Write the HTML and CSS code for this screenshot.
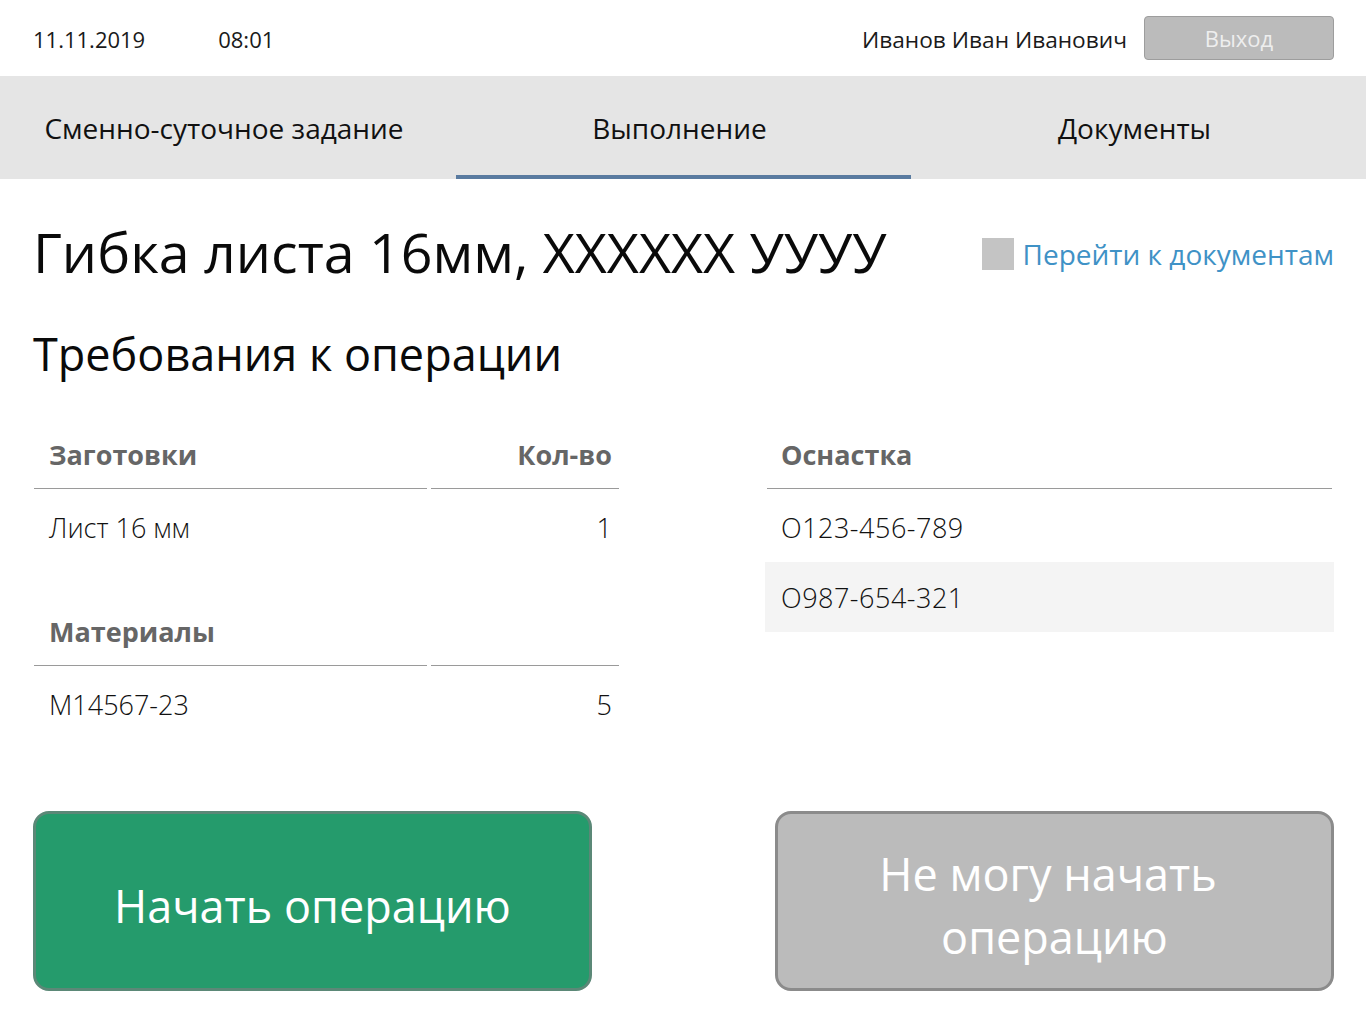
FILE: index.html
```html
<!DOCTYPE html>
<html lang="ru">
<head>
<meta charset="utf-8">
<title>Выполнение</title>
<link rel="stylesheet" href="styles.css">
</head>
<body>
<header class="topbar">
  <span class="date">11.11.2019</span>
  <span class="time">08:01</span>
  <span class="spacer"></span>
  <span class="user">Иванов Иван Иванович</span>
  <button class="exit-btn">Выход</button>
</header>
<nav class="tabs">
  <div class="tab">Сменно-суточное задание</div>
  <div class="tab tab-active">Выполнение</div>
  <div class="tab">Документы</div>
</nav>
<main class="content">
  <div class="title-row">
    <h1 class="title">Гибка листа 16мм, XXXXXX УУУУ</h1>
    <a class="doc-link"><span class="doc-icon"></span>Перейти к документам</a>
  </div>
  <h2 class="subtitle">Требования к операции</h2>
  <div class="req-grid">
    <div class="left-col">
      <section class="tbl">
        <div class="tbl-head">
          <div class="cell name-cell">Заготовки</div>
          <div class="cell qty-cell">Кол-во</div>
        </div>
        <div class="tbl-body">
          <div class="tbl-row">
            <div class="cell name-cell">Лист 16 мм</div>
            <div class="cell qty-cell">1</div>
          </div>
        </div>
      </section>
      <section class="tbl">
        <div class="tbl-head">
          <div class="cell name-cell">Материалы</div>
          <div class="cell qty-cell"></div>
        </div>
        <div class="tbl-body">
          <div class="tbl-row">
            <div class="cell name-cell">M14567-23</div>
            <div class="cell qty-cell">5</div>
          </div>
        </div>
      </section>
    </div>
    <div class="right-col">
      <section class="tbl tbl-single">
        <div class="tbl-head">
          <div class="cell full-cell">Оснастка</div>
        </div>
        <div class="tbl-body">
          <div class="tbl-row">
            <div class="cell full-cell">O123-456-789</div>
          </div>
          <div class="tbl-row row-alt">
            <div class="cell full-cell">O987-654-321</div>
          </div>
        </div>
      </section>
    </div>
  </div>
  <div class="actions">
    <button class="big-btn btn-start">Начать операцию</button>
    <button class="big-btn btn-cant"><span class="line1">Не могу начать</span><br>операцию</button>
  </div>
</main>
</body>
</html>
```
FILE: styles.css
```css
* { box-sizing: border-box; }
html, body { margin: 0; padding: 0; background: #fff; }
body {
  font-family: "Open Sans", "Noto Sans", sans-serif;
  color: #111;
  width: 1366px;
}
button { font-family: inherit; cursor: pointer; }

.topbar {
  height: 76px;
  display: flex;
  align-items: center;
  padding: 0 32px 0 33px;
  font-size: 22px;
  color: #1a1a1a;
}
.date, .time, .user { padding-top: 2px; }
.time { margin-left: 73px; }
.spacer { flex: 1; }
.user { margin-right: 17px; font-size: 22.7px; }
.exit-btn {
  width: 190px;
  height: 44px;
  background: #bbbbbb;
  border: 1px solid #9d9d9d;
  border-radius: 4px;
  color: #eeeeee;
  font-size: 22px;
  padding: 0;
}

.tabs {
  height: 103px;
  background: #e5e5e5;
  display: grid;
  grid-template-columns: 456px 455px 455px;
}
.tab {
  display: flex;
  align-items: center;
  justify-content: center;
  font-size: 28px;
  color: #111;
  border-bottom: 4px solid transparent;
  padding-top: 4px;
  padding-right: 8px;
}
.tab-active { border-bottom-color: #5a7ba0; }

.content {
  padding: 32px 32px 0 33px;
}
.title-row {
  display: flex;
  align-items: center;
  justify-content: space-between;
  height: 80px;
}
.title {
  margin: 0;
  font-size: 55.5px;
  font-weight: 400;
  line-height: 80px;
  color: #0a0a0a;
  padding-top: 2px;
}
.doc-link {
  display: flex;
  align-items: center;
  font-size: 28px;
  color: #3f92c6;
  margin-top: 6px;
}
.doc-icon {
  width: 32px;
  height: 32px;
  background: #c4c4c4;
  margin-right: 9px;
}
.subtitle {
  margin: 0;
  margin-top: 33px;
  font-size: 45px;
  font-weight: 400;
  line-height: 60px;
  color: #0a0a0a;
}

.req-grid {
  display: grid;
  grid-template-columns: 586px 569px;
  column-gap: 145px;
  margin-top: 34px;
  padding-left: 1px;
}
.left-col { display: flex; flex-direction: column; gap: 33px; }
.tbl-head {
  display: flex;
  gap: 4px;
  height: 71px;
}
.tbl-head .cell {
  height: 71px;
  border-bottom: 1px solid #9a9a9a;
  font-size: 27px;
  font-weight: 700;
  color: #666;
  padding-top: 3px;
}
.tbl-body { padding-top: 3px; }
.tbl-row {
  display: flex;
  gap: 4px;
  height: 70px;
}
.tbl-row .cell {
  font-size: 27px;
  font-weight: 300;
  color: #111;
}
.cell {
  display: flex;
  align-items: center;
  padding: 0 15px;
}
.name-cell { width: 393px; }
.qty-cell { width: 188px; justify-content: flex-end; padding-right: 7px; }
.tbl-single .tbl-head { margin: 0 2px; }
.tbl-single .tbl-head .cell { padding-left: 14px; }
.full-cell { flex: 1; padding-left: 16px; letter-spacing: 0.5px; }
.tbl-single .tbl-head .full-cell { letter-spacing: 0; }
.right-col { width: 569px; }
.row-alt { background: #f4f4f4; }

.actions {
  display: flex;
  justify-content: space-between;
  margin-top: 72px;
}
.big-btn {
  width: 559px;
  height: 180px;
  border-radius: 16px;
  border: 3px solid;
  color: #fff;
  font-size: 45px;
  line-height: 63px;
  padding: 8px 0 0;
}
.btn-start {
  background: #259b6c;
  border-color: #5b8877;
}
.btn-cant {
  background: #bbbbbb;
  border-color: #8b8b8b;
}
.line1 { margin-right: 13px; }
```
